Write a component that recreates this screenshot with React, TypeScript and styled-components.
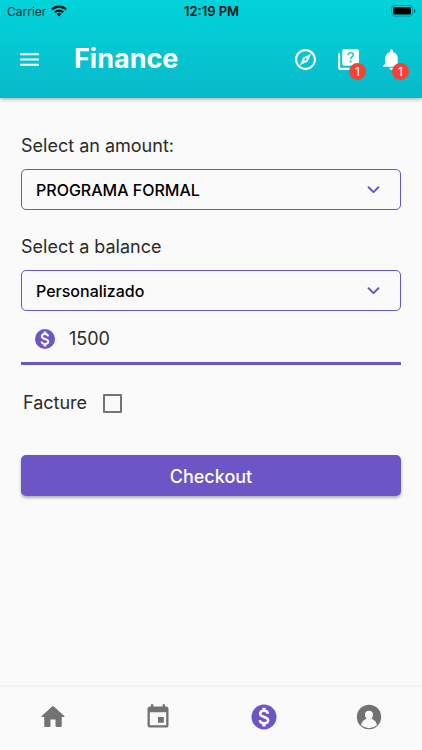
import React, { useState } from "react";
import styled, { createGlobalStyle } from "styled-components";
import { MdMenu, MdOutlineExplore, MdNotifications, MdEvent } from "react-icons/md";

const purple = "#6c55c4";
const grey = "#727272";

const GlobalStyle = createGlobalStyle`
  * { box-sizing: border-box; }
  body {
    margin: 0;
    background: #fafafa;
    color: #2b2b2b;
    font-family: Inter, Roboto, sans-serif;
  }
  button, input, select { font-family: inherit; }
`;

const Page = styled.div`
  display: flex;
  flex-direction: column;
  min-height: 100vh;
`;

const Header = styled.header`
  background: linear-gradient(#02d3da, #08bac9);
  box-shadow: 0 1px 4px rgba(0, 0, 0, 0.35);
`;

const StatusBar = styled.div`
  display: grid;
  grid-template-columns: 1fr auto 1fr;
  align-items: center;
  height: 22px;
  padding: 0 6px 0 7px;
  color: #072a2d;
  font-size: 12px;
`;

const Carrier = styled.span`
  display: flex;
  align-items: center;
  gap: 5px;
`;

const Clock = styled.time`
  color: #031416;
  font-size: 13px;
  font-weight: 600;
`;

const Battery = styled.svg`
  justify-self: end;
`;

const Toolbar = styled.div`
  display: flex;
  align-items: center;
  height: 76px;
  padding: 0 10px 2px 8px;
`;

const IconButton = styled.button`
  position: relative;
  display: grid;
  place-items: center;
  width: 42px;
  height: 42px;
  padding: 0;
  border: 0;
  background: none;
  color: #fff;
  cursor: pointer;
`;

const Title = styled.h1`
  flex: 1;
  margin: 0 0 0 24px;
  color: #fff;
  font-size: 27px;
  line-height: 32px;
  font-weight: 700;
`;

const Actions = styled.div`
  display: flex;
  gap: 1px;
`;

const Badge = styled.span`
  position: absolute;
  right: 3px;
  bottom: 0;
  width: 17px;
  height: 17px;
  border-radius: 50%;
  background: #f44336;
  color: #fff;
  font-size: 12px;
  line-height: 17px;
  text-align: center;
`;

const Form = styled.form`
  flex: 1;
  display: flex;
  flex-direction: column;
  padding: 36px 21px 24px;
`;

const Field = styled.div`
  display: flex;
  flex-direction: column;
  gap: 11px;
  & + & { margin-top: 25px; }
`;

const Label = styled.label`
  font-size: 18px;
  line-height: 24px;
`;

const SelectBox = styled.div`
  display: grid;
  align-items: center;
  & > * { grid-area: 1 / 1; }
  & > svg {
    justify-self: end;
    margin-right: 20px;
    pointer-events: none;
  }
`;

const Select = styled.select`
  appearance: none;
  width: 100%;
  height: 41px;
  padding: 0 48px 0 14px;
  border: 1px solid ${purple};
  border-radius: 5px;
  background: transparent;
  color: #000;
  font-size: 16px;
  font-weight: 500;
`;

const AmountRow = styled.div`
  display: flex;
  align-items: center;
  gap: 12px;
  height: 54px;
  padding: 4px 0 0 12px;
  border-bottom: 3px solid ${purple};
  color: ${purple};
`;

const AmountInput = styled.input`
  flex: 1;
  min-width: 0;
  padding: 0;
  border: 0;
  outline: 0;
  background: none;
  color: #2b2b2b;
  font-size: 18px;
  line-height: 24px;
`;

const CheckRow = styled.div`
  display: flex;
  align-items: center;
  gap: 16px;
  margin: 26px 0 0 2px;
`;

const Checkbox = styled.input`
  appearance: none;
  width: 19px;
  height: 19px;
  margin: 0;
  border: 2px solid #737373;
  border-radius: 1px;
  &:checked {
    border-color: ${purple};
    background: ${purple};
  }
`;

const Submit = styled.button`
  height: 41px;
  margin-top: 40px;
  padding: 2px 0 0;
  border: 0;
  border-radius: 5px;
  background: ${purple};
  box-shadow: 0 2px 3px rgba(0, 0, 0, 0.3);
  color: #fff;
  font-size: 18px;
  font-weight: 500;
  cursor: pointer;
`;

const BottomNav = styled.nav`
  position: sticky;
  bottom: 0;
  display: grid;
  grid-template-columns: repeat(4, 1fr);
  height: 65px;
  padding-bottom: 4px;
  border-top: 2px solid #f3f3f3;
  background: #fafafa;
`;

const NavLink = styled.a<{ $active?: boolean }>`
  display: grid;
  place-items: center;
  color: ${({ $active }) => ($active ? purple : grey)};
`;

const WifiIcon = () => (
  <svg width="16" height="12" viewBox="0 0 16 12" aria-hidden="true">
    <g fill="none" stroke="#031416" strokeWidth="2.2">
      <path d="M1 4.4a10 10 0 0 1 14 0" />
      <path d="M3.8 7.3a6 6 0 0 1 8.4 0" />
    </g>
    <path d="M8 11.4 5.6 9a3.4 3.4 0 0 1 4.8 0z" fill="#031416" />
  </svg>
);

const BatteryIcon = () => (
  <Battery width="25" height="12" viewBox="0 0 25 12" role="img" aria-label="Battery full">
    <rect x="0.5" y="0.5" width="21" height="10.6" rx="3" fill="none" stroke="#078f96" />
    <rect x="2" y="2" width="18" height="7.6" rx="1.6" fill="#000" />
    <path d="M23 4v4q1.4-.6 1.4-2T23 4z" fill="#06676d" />
  </Battery>
);

const QuestionsIcon = () => (
  <svg width="25" height="25" viewBox="0 0 24 24" aria-hidden="true">
    <path d="M4 6H2v14c0 1.1.9 2 2 2h14v-2H4z" fill="currentColor" />
    <rect x="6" y="2" width="16" height="16" rx="1.6" fill="currentColor" />
    <path d="M11.6 7.9V6.7q.9-1.2 2.5-1.2 2.4 0 2.4 2.1c0 1.8-2.5 1.9-2.5 4.2" fill="none" stroke="#06b8c6" strokeWidth="1.2" />
    <rect x="13.2" y="13.2" width="1.6" height="1.6" fill="#06b8c6" />
  </svg>
);

const Chevron = () => (
  <svg width="15" height="10" viewBox="0 0 15 10" aria-hidden="true">
    <path d="m2.6 2.2 4.9 4.9 4.9-4.9" fill="none" stroke={purple} strokeWidth="2" strokeLinecap="round" strokeLinejoin="round" />
  </svg>
);

const DollarIcon = ({ size }: { size: number }) => (
  <svg width={size} height={size} viewBox="0 0 24 24" aria-hidden="true">
    <circle cx="12" cy="12" r="10" fill="currentColor" />
    <g fill="none" stroke="#fafafa" strokeWidth="2">
      <path d="M15.200 9.400C15 7.900 13.800 7 12 7S8.900 7.900 8.900 9.400c0 3.400 6.400 1.700 6.400 5.200 0 1.500-1.300 2.400-3.300 2.400s-3.200-.9-3.400-2.500" />
      <path d="M12 4.500V7M12 17v2.500" strokeWidth="2.600" />
    </g>
  </svg>
);

const HomeIcon = () => (
  <svg width="30" height="30" viewBox="0 0 24 24" fill="currentColor" aria-hidden="true">
    <path d="M10 19v-5h4v5c0 .55.45 1 1 1h3c.55 0 1-.45 1-1v-7h1.7c.46 0 .68-.57.33-.87L12.67 3.6a1 1 0 0 0-1.34 0l-8.36 7.53c-.34.3-.13.87.33.87H5v7c0 .55.45 1 1 1h3c.55 0 1-.45 1-1z" />
  </svg>
);

const ProfileIcon = () => (
  <svg width="26" height="26" viewBox="0 0 26 26" aria-hidden="true">
    <circle cx="13" cy="13" r="12.2" fill="currentColor" />
    <path d="M13 6.8a4 4 0 0 0-4 4c0 1.7.6 3 1.6 3.900-2.900 1-4.900 3.200-5.700 6.300Q8.500 24.200 13 24.200t8.100-3.200c-.8-3.100-2.800-5.300-5.700-6.300 1-.9 1.600-2.200 1.600-3.900a4 4 0 0 0-4-4z" fill="#fafafa" />
  </svg>
);

export default function App() {
  const [program, setProgram] = useState("PROGRAMA FORMAL");
  const [balance, setBalance] = useState("Personalizado");
  const [amount, setAmount] = useState("1500");
  const [invoice, setInvoice] = useState(false);

  return (
    <Page>
      <GlobalStyle />
      <Header>
        <StatusBar>
          <Carrier>Carrier <WifiIcon /></Carrier>
          <Clock>12:19 PM</Clock>
          <BatteryIcon />
        </StatusBar>
        <Toolbar>
          <IconButton aria-label="Menu"><MdMenu size={25} /></IconButton>
          <Title>Finance</Title>
          <Actions>
            <IconButton aria-label="Explore"><MdOutlineExplore size={25} /></IconButton>
            <IconButton aria-label="Questions"><QuestionsIcon /><Badge>1</Badge></IconButton>
            <IconButton aria-label="Notifications"><MdNotifications size={25} /><Badge>1</Badge></IconButton>
          </Actions>
        </Toolbar>
      </Header>
      <Form onSubmit={(e) => e.preventDefault()}>
        <Field>
          <Label htmlFor="program">Select an amount:</Label>
          <SelectBox>
            <Select id="program" value={program} onChange={(e) => setProgram(e.target.value)}>
              <option>PROGRAMA FORMAL</option>
            </Select>
            <Chevron />
          </SelectBox>
        </Field>
        <Field>
          <Label htmlFor="balance">Select a balance</Label>
          <SelectBox>
            <Select id="balance" value={balance} onChange={(e) => setBalance(e.target.value)}>
              <option>Personalizado</option>
            </Select>
            <Chevron />
          </SelectBox>
        </Field>
        <AmountRow>
          <DollarIcon size={24} />
          <AmountInput aria-label="Amount" inputMode="numeric" value={amount} onChange={(e) => setAmount(e.target.value)} />
        </AmountRow>
        <CheckRow>
          <Label htmlFor="facture">Facture</Label>
          <Checkbox id="facture" type="checkbox" checked={invoice} onChange={(e) => setInvoice(e.target.checked)} />
        </CheckRow>
        <Submit type="submit">Checkout</Submit>
      </Form>
      <BottomNav aria-label="Main">
        <NavLink href="#home" aria-label="Home"><HomeIcon /></NavLink>
        <NavLink href="#calendar" aria-label="Calendar"><MdEvent size={28} /></NavLink>
        <NavLink href="#finance" aria-label="Finance" aria-current="page" $active><DollarIcon size={30} /></NavLink>
        <NavLink href="#profile" aria-label="Profile"><ProfileIcon /></NavLink>
      </BottomNav>
    </Page>
  );
}
